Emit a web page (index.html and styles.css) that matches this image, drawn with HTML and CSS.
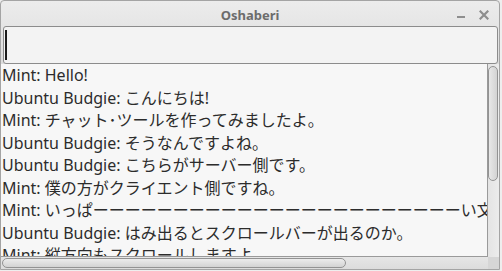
FILE: index.html
```html
<!DOCTYPE html>
<html lang="ja">
<head>
    <meta charset="UTF-8">
    <title>Oshaberi</title>
    <link rel="stylesheet" href="styles.css">
</head>
<body>

    <div class="window">
        <div class="titlebar">
            <span class="title">Oshaberi</span>
            <div class="controls">
                <span class="btn-min"></span>
                <svg class="btn-close" width="10" height="10" viewBox="0 0 10 10">
                    <path d="M1.5 1.5 L8.5 8.5 M8.5 1.5 L1.5 8.5" stroke="#8e8e8e" stroke-width="2.2" stroke-linecap="square"/>
                </svg>
            </div>
        </div>

        <div class="entry"><span class="caret"></span></div>

        <div class="view">
            <div class="log">
                <div class="line">Mint: Hello!</div>
                <div class="line">Ubuntu Budgie: こんにちは!</div>
                <div class="line">Mint: チャット･ツールを作ってみましたよ。</div>
                <div class="line">Ubuntu Budgie: そうなんですよね。</div>
                <div class="line">Ubuntu Budgie: こちらがサーバー側です。</div>
                <div class="line">Mint: 僕の方がクライエント側ですね。</div>
                <div class="line">Mint: いっぱーーーーーーーーーーーーーーーーーーーーーーーい文字を書いてみます。</div>
                <div class="line">Ubuntu Budgie: はみ出るとスクロールバーが出るのか。</div>
                <div class="line">Mint: 縦方向もスクロールしますよ。</div>
                <div class="line">Ubuntu Budgie: 便利ですね。</div>
                <div class="line">Mint: そうでしょう。</div>
                <div class="line">Ubuntu Budgie: では、また。</div>
            </div>
            <div class="vscroll"><div class="vthumb"></div></div>
            <div class="hscroll"><div class="hthumb"></div></div>
            <div class="corner"></div>
        </div>
    </div>

</body>
</html>
```

FILE: styles.css
```css
body {
    margin: 0;
    width: 502px;
    height: 271px;
    overflow: hidden;
    background: #eeeeee;
    font-family: "Noto Sans", "Noto Sans CJK JP", sans-serif;
}

.window {
    width: 500px;
    height: 270px;
    box-sizing: border-box;
    border: 1px solid #a4a4a4;
    border-radius: 4px 4px 0 0;
    background: linear-gradient(#ececec, #dcdcdc 60px, #dadada);
    display: flex;
    flex-direction: column;
    overflow: hidden;
}

.titlebar {
    height: 25px;
    flex: none;
    display: flex;
    justify-content: center;
    align-items: center;
    position: relative;
}

.title {
    font-size: 13px;
    font-weight: bold;
    color: #6c6c6c;
    margin-top: 2px;
}

.controls {
    position: absolute;
    right: 10px;
    top: 9px;
    display: flex;
    align-items: center;
    gap: 14px;
}

.btn-min {
    width: 8px;
    height: 2px;
    background: #8e8e8e;
    margin-top: 4px;
}

.btn-close {
    display: block;
}

.entry {
    height: 38px;
    flex: none;
    box-sizing: border-box;
    margin: 0 1px 0 2px;
    border: 1px solid #8c8c8c;
    border-radius: 3px;
    background: #f3f3f3;
    padding: 3px 0 0 1px;
}

.caret {
    display: block;
    width: 2px;
    height: 30px;
    background: #1c1c1c;
}

.view {
    flex: 1;
    display: grid;
    grid-template-columns: 487px 1fr;
    grid-template-rows: 193px 12px;
    min-height: 0;
}

.log {
    background: #f7f7f7;
    border-right: 1px solid #9a9a9a;
    border-bottom: 1px solid #9a9a9a;
    padding-left: 1px;
    overflow: hidden;
    font-size: 16px;
    line-height: 22.5px;
    color: #2c2c2c;
    white-space: nowrap;
}

.vscroll {
    background: linear-gradient(to right, #e4e4e4, #ececec);
    padding: 2px 0 0 0;
}

.vthumb {
    height: 115px;
    width: 10px;
    box-sizing: border-box;
    border: 1px solid #939393;
    border-radius: 5px;
    background: linear-gradient(to right, #e8e8e8, #d3d3d3);
}

.hscroll {
    background: linear-gradient(#e6e6e6, #dcdcdc);
    padding: 1px 0 0 1px;
}

.hthumb {
    width: 344px;
    height: 10px;
    box-sizing: border-box;
    border: 1px solid #939393;
    border-radius: 5px;
    background: linear-gradient(#ececec, #d3d3d3);
}

.corner {
    background: #d6d6d6;
}
```
